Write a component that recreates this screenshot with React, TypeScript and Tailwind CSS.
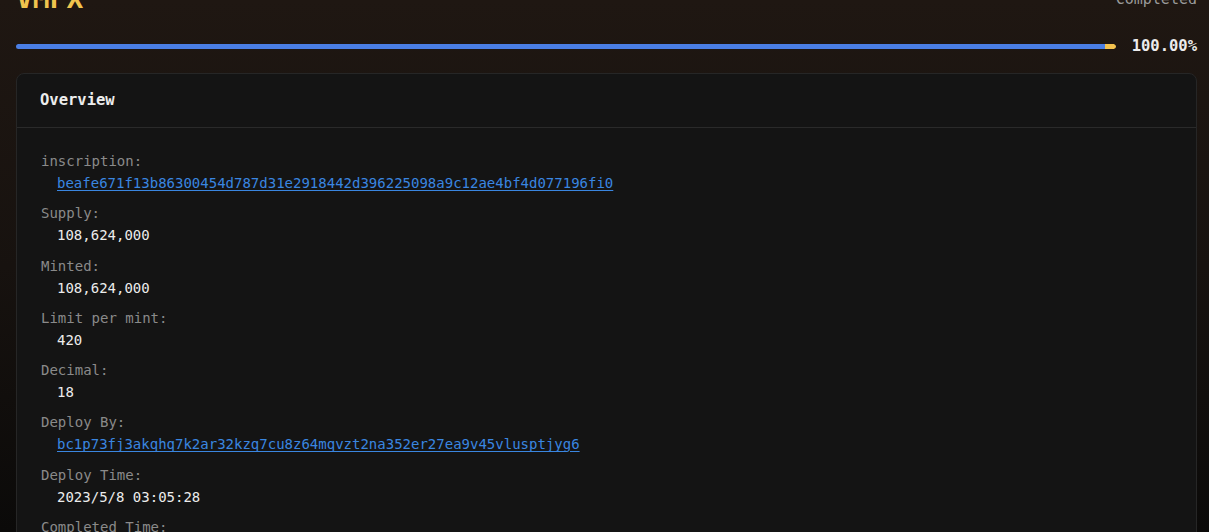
const rows: { label: string; value: string; link?: boolean }[] = [
  { label: 'inscription:', value: 'beafe671f13b86300454d787d31e2918442d396225098a9c12ae4bf4d077196fi0', link: true },
  { label: 'Supply:', value: '108,624,000' },
  { label: 'Minted:', value: '108,624,000' },
  { label: 'Limit per mint:', value: '420' },
  { label: 'Decimal:', value: '18' },
  { label: 'Deploy By:', value: 'bc1p73fj3akqhq7k2ar32kzq7cu8z64mqvzt2na352er27ea9v45vlusptjyg6', link: true },
  { label: 'Deploy Time:', value: '2023/5/8 03:05:28' },
  { label: 'Completed Time:', value: '2023/5/8 04:12:51' },
];

export default function App() {
  return (
    <div
      className="h-[532px] overflow-hidden bg-gradient-to-b from-[#1f1712] via-[#17120f] to-[#0b0a09] pl-4 pr-3"
      style={{ fontFamily: '"DejaVu Sans Mono", "Liberation Mono", monospace' }}
    >
      <div className="-mt-[17px] flex h-[32px] items-start justify-between">
        <h1 className="text-[28px] font-bold leading-[32px] text-[#f0c44e]">VMPX</h1>
        <span className="mt-[6px] text-[15px] leading-[20px] text-[#9a9a9a]">Completed</span>
      </div>

      <div className="mt-[21px] flex items-center gap-4">
        <div className="flex h-[5px] flex-1 overflow-hidden rounded-full">
          <div className="h-full flex-1 bg-[#4a7ee4]" />
          <div className="h-full w-[11px] rounded-r-full bg-[#f2c14e]" />
        </div>
        <span className="text-[15.5px] font-bold leading-[20px] text-[#ececec]">100.00%</span>
      </div>

      <div className="mt-[17px] rounded-lg border border-[#262626] bg-[#141414]">
        <div className="flex h-[54px] items-center border-b border-[#2a2a2a] px-[23px]">
          <h2 className="text-[15.5px] font-bold text-[#ededed]">Overview</h2>
        </div>
        <div className="px-6 pt-[22px]">
          {rows.map((r) => (
            <div key={r.label} className="mb-[8.3px]">
              <div className="text-[14px] leading-[22px] text-[#8a8a8a]">{r.label}</div>
              <div className="pl-4 text-[14px] leading-[22px]">
                {r.link ? (
                  <a href="#" className="text-[#3a86e0] underline underline-offset-2">
                    {r.value}
                  </a>
                ) : (
                  <span className="text-[#ececec]">{r.value}</span>
                )}
              </div>
            </div>
          ))}
        </div>
      </div>
    </div>
  );
}
